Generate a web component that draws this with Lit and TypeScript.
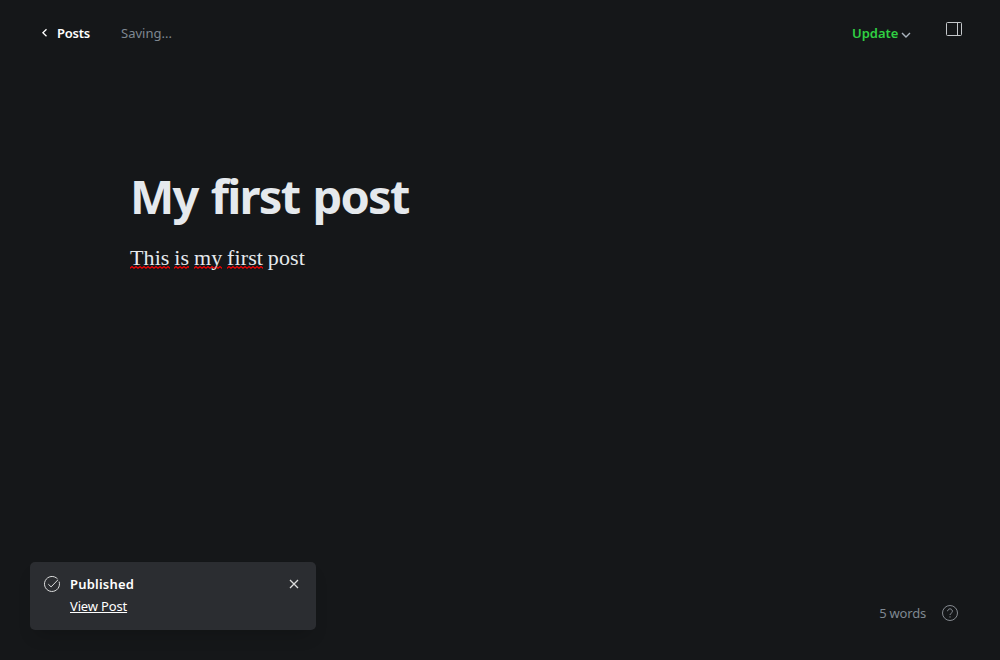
import { LitElement, html, css } from "lit";
import { customElement } from "lit/decorators.js";

@customElement("app-root")
export class AppRoot extends LitElement {
  static styles = css`
    :host {
      display: flex;
      flex-direction: column;
      box-sizing: border-box;
      width: 100%;
      height: 100vh;
      overflow: hidden;
      background: #151719;
      color: #fff;
      font: 13px/20px "Noto Sans", "Open Sans", sans-serif;
    }
    * { box-sizing: border-box; }
    svg { display: block; fill: none; stroke: currentColor; flex: none; }
    button { border: 0; padding: 0; background: none; color: inherit; font: inherit; }
    header { display: flex; height: 66px; padding: 0 38px 0 41px; align-items: center; white-space: nowrap; }
    .back { display: flex; align-items: center; gap: 8px; width: 80px; font-weight: 600; letter-spacing: -0.25px; }
    .saving { color: #7f8891; letter-spacing: 0; }
    .update { display: flex; align-items: center; gap: 3px; margin-left: auto; color: #30cf43; font-weight: 600; width: 94px; }
    .update svg { color: #abb4be; margin-top: 4px; }
    .panel { color: #c5c8cb; margin-bottom: 8px; }
    main { flex: 1; padding: 100px 130px 0; }
    h1 { margin: 0; color: #e5e9ed; font-size: 47px; line-height: 60px; font-weight: 700; letter-spacing: -1.75px; word-spacing: 2.7px; white-space: nowrap; }
    p { display: flex; gap: 4.8px; margin: 18px 0 0; font: 22px/28px Georgia, "Liberation Serif", serif; letter-spacing: 0.1px; color: #e5e9ed; white-space: nowrap; }
    .misspelt {
      background: url("data:image/svg+xml,%3Csvg xmlns='http://www.w3.org/2000/svg' width='4' height='3'%3E%3Cpath d='M-1 3 L2 .5 L5 3' fill='none' stroke='red' stroke-width='1.1'/%3E%3C/svg%3E") 0 22px repeat-x;
    }
    footer { display: flex; align-items: flex-end; justify-content: space-between; padding: 0 42px 30px 30px; }
    .toast {
      display: grid;
      grid-template-columns: 16px 1fr 10px;
      column-gap: 10px;
      width: 286px;
      height: 68px;
      padding: 12px 17px 0 14px;
      border-radius: 5px;
      background: #2b2d31;
      box-shadow: 0 10px 18px -6px #0003;
      align-content: start;
    }
    .toast svg { margin-top: 2px; color: #dcdddd; }
    .toast .close { margin-top: 5px; }
    .title { font-weight: 600; line-height: 20px; letter-spacing: 0.2px; }
    .link { display: block; color: #fff; line-height: 20px; margin-top: 2px; letter-spacing: -0.15px; text-underline-offset: 1px; }
    .count { display: flex; align-items: center; gap: 16px; height: 34px; color: #7f8891; letter-spacing: -0.2px; }
    .count svg { color: #858a90; }
  `;

  render() {
    return html`
      <header>
        <button class="back">
          <svg width="8" height="10" viewBox="0 0 8 10" stroke="#fff" stroke-width="1.3"><path d="M5.5 1.2 1.9 4.7l3.6 3.5" /></svg>
          <span class="back-label">Posts</span>
        </button>
        <span class="saving">Saving...</span>
        <button class="update">
          <span class="update-label">Update</span>
          <svg width="10" height="6" viewBox="0 0 10 6" stroke-width="1.4"><path d="m1 1 4 4 4-4" /></svg>
        </button>
        <button class="panel">
          <svg width="16" height="14" viewBox="0 0 16 14"><rect x=".5" y=".5" width="15" height="13" rx="1" /><path d="M11.5.5v13" /></svg>
        </button>
      </header>
      <main>
        <h1>My first post</h1>
        <p>
          <span class="misspelt">This</span><span class="misspelt">is</span><span class="misspelt">my</span><span class="misspelt">first</span><span>post</span>
        </p>
      </main>
      <footer>
        <section class="toast">
          <svg width="16" height="16" viewBox="0 0 16 16" stroke-width="1"><path d="M15.1 5.6A7.5 7.5 0 1 1 13.6 3M4.3 8.2l2.8 2.7 6.8-7" /></svg>
          <div>
            <div class="title">Published</div>
            <a class="link" href="#">View Post</a>
          </div>
          <svg class="close" width="10" height="10" viewBox="0 0 10 10" stroke-width="1.3"><path d="m1 1 8 8M9 1 1 9" /></svg>
        </section>
        <div class="count">
          <span class="words">5 words</span>
          <svg width="16" height="16" viewBox="0 0 16 16"><circle cx="8" cy="8" r="7.5" /><path d="M5.6 6.2a2.4 2.4 0 1 1 3.6 2.1C8.4 8.8 8 9.1 8 10M8 11.3v1.2" /></svg>
        </div>
      </footer>
    `;
  }
}
